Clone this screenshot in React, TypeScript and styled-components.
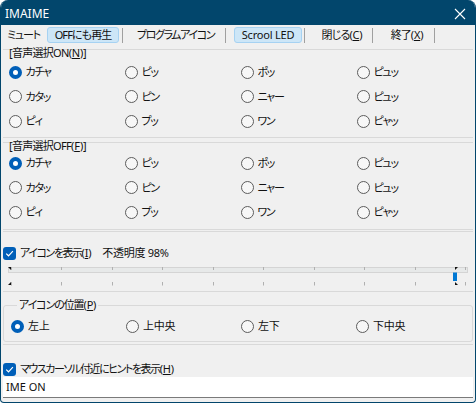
import React from 'react'
import styled, { createGlobalStyle } from 'styled-components'

const GlobalStyle = createGlobalStyle`
  html, body {
    margin: 0;
    padding: 0;
    background: #ffffff;
  }
  body {
    font-family: 'Noto Sans', 'Noto Sans CJK JP', sans-serif;
    font-size: 11px;
    font-weight: 400;
    letter-spacing: -0.9px;
    color: #1a1a1a;
  }
  * {
    box-sizing: border-box;
  }
`

const ACCENT = '#02466c'
const BLUE = '#005fb8'

const TOP_SOUNDS = [
  ['カチャ', 'ピッ', 'ポッ', 'ピュッ'],
  ['カタッ', 'ピン', 'ニャー', 'ピュッ'],
  ['ピィ', 'プッ', 'ワン', 'ピャッ'],
]

const POSITIONS = ['左上', '上中央', '左下', '下中央']

// アクセスキー表示 "(X)"
const Key = ({ k }: { k: string }) => (
  <KeyText>(<u>{k}</u>)</KeyText>
)

type ToolItem =
  | { kind: 'btn'; label: React.ReactNode; w: number; ml: number; on?: boolean; ls: number }
  | { kind: 'sep'; ml: number }

const TOOLS: ToolItem[] = [
  { kind: 'btn', label: 'ミュート', w: 41, ml: 0, ls: -1.2 },
  { kind: 'btn', label: 'OFFにも再生', w: 72, ml: 3, on: true, ls: -0.9 },
  { kind: 'sep', ml: 3 },
  { kind: 'btn', label: 'プログラムアイコン', w: 97, ml: 4, ls: -1.4 },
  { kind: 'sep', ml: 1 },
  { kind: 'btn', label: 'Scrool LED', w: 68, ml: 8, on: true, ls: -0.2 },
  { kind: 'sep', ml: 2 },
  { kind: 'btn', label: <>閉じる<Key k="C" /></>, w: 56, ml: 9, ls: -0.9 },
  { kind: 'sep', ml: 2 },
  { kind: 'btn', label: <>終了<Key k="X" /></>, w: 52, ml: 8, ls: -0.9 },
  { kind: 'sep', ml: 1 },
]

const Check = () => (
  <CheckBox>
    <svg width="9" height="9" viewBox="0 0 9 9">
      <path d="M1.2 4.6 L3.5 6.8 L7.9 2.2" stroke="#fff" strokeWidth="1.2" fill="none" />
    </svg>
  </CheckBox>
)

const SoundGroup = ({ title, gapTop, padTop, padBottom }: {
  title: React.ReactNode
  gapTop: number
  padTop: number
  padBottom: number
}) => (
  <SoundPanel $gapTop={gapTop} $padBottom={padBottom}>
    <PanelLabel>{title}</PanelLabel>
    <RadioGrid $padTop={padTop}>
      {TOP_SOUNDS.flat().map((s, i) => (
        <RadioItem key={i}>
          <RadioCircle $on={i === 0} />
          <RadioText $ls={-1.3}>{s}</RadioText>
        </RadioItem>
      ))}
    </RadioGrid>
  </SoundPanel>
)

export default function App() {
  return (
    <>
      <GlobalStyle />
      <Window>
        <TitleBar>
          <TitleText>IMAIME</TitleText>
          <CloseIcon width="12" height="12" viewBox="0 0 12 12">
            <path d="M1 1 L11 11 M11 1 L1 11" stroke="#ffffff" strokeWidth="1.1" fill="none" />
          </CloseIcon>
        </TitleBar>

        <Body>
          <Toolbar>
            {TOOLS.map((t, i) =>
              t.kind === 'sep' ? (
                <ToolSep key={i} $ml={t.ml} />
              ) : (
                <ToolButton key={i} $w={t.w} $ml={t.ml} $on={t.on} $ls={t.ls}>
                  {t.label}
                </ToolButton>
              )
            )}
          </Toolbar>

          <SoundGroup title={<>[音声選択ON<Key k="N" />]</>} gapTop={0} padTop={2} padBottom={3.5} />
          <SoundGroup title={<>[音声選択OFF<Key k="F" />]</>} gapTop={4} padTop={0} padBottom={4.5} />

          <SliderPanel>
            <CheckRow>
              <Check />
              <CheckText>アイコンを表示<Key k="I" /></CheckText>
              <OpacityText>不透明度 98%</OpacityText>
            </CheckRow>
            <Slider>
              <Track />
              <SliderMarks width="470" height="19" viewBox="0 0 470 19">
                {Array.from({ length: 10 }).map((_, k) => {
                  const x = Math.round(7.8 + 50.5 * k) + 0.5
                  return (
                    <g key={k} stroke="#b0b0b0" strokeWidth="1">
                      <line x1={x} y1={0} x2={x} y2={3} />
                      <line x1={x} y1={15} x2={x} y2={18.5} />
                    </g>
                  )
                })}
                <path d="M5 0 H8 V3 Z" fill="#111" />
                <path d="M5 18 H8 V15 Z" fill="#111" />
                <path d="M452 0 H455 L452 3 Z" fill="#111" />
                <path d="M452 18 H455 L452 15 Z" fill="#111" />
                <rect x="450" y="5.5" width="4" height="8.5" fill="#0078d4" />
              </SliderMarks>
            </Slider>
          </SliderPanel>

          <PositionGroup>
            <GroupLabel>アイコンの位置<Key k="P" /></GroupLabel>
            <PositionRow>
              {POSITIONS.map((p, i) => (
                <RadioItem key={p}>
                  <RadioCircle $on={i === 0} />
                  <RadioText $ls={-0.3}>{p}</RadioText>
                </RadioItem>
              ))}
            </PositionRow>
          </PositionGroup>

          <HintPanel>
            <CheckRow>
              <Check />
              <CheckText>マウスカーソル付近にヒントを表示<Key k="H" /></CheckText>
            </CheckRow>
            <EditBox>IME ON</EditBox>
          </HintPanel>
        </Body>
      </Window>
    </>
  )
}

const Window = styled.div`
  width: 476px;
  height: 403px;
  background: #f0f0f0;
  border: 1px solid ${ACCENT};
  border-top: none;
  border-radius: 8px 8px 4px 4px;
  overflow: hidden;
  display: flex;
  flex-direction: column;
  font-feature-settings: 'palt' 1;
`

const TitleBar = styled.div`
  height: 25px;
  flex: none;
  background: ${ACCENT};
  display: flex;
  align-items: center;
  justify-content: space-between;
  padding: 0 9px 0 4px;
`

const TitleText = styled.span`
  font-family: 'Noto Sans', sans-serif;
  font-size: 12px;
  letter-spacing: 0;
  color: #ffffff;
  line-height: 14px;
  margin-top: 2px;
`

const CloseIcon = styled.svg`
  display: block;
  margin-top: 2px;
`

const Body = styled.div`
  flex: 1;
  display: flex;
  flex-direction: column;
  padding: 0 2px;
`

const KeyText = styled.span`
  letter-spacing: -0.2px;

  u {
    text-underline-offset: 1px;
  }
`

const Toolbar = styled.div`
  height: 24px;
  flex: none;
  display: flex;
  align-items: flex-start;
  padding-top: 2px;
`

const ToolButton = styled.div<{ $w: number; $ml: number; $on?: boolean; $ls: number }>`
  width: ${p => p.$w}px;
  margin-left: ${p => p.$ml}px;
  height: 16px;
  flex: none;
  display: flex;
  align-items: center;
  justify-content: center;
  white-space: nowrap;
  line-height: 14px;
  color: #111;
  letter-spacing: ${p => p.$ls}px;
  border-radius: 3px;
  border: 1px solid ${p => (p.$on ? '#a6d2f2' : 'transparent')};
  background: ${p => (p.$on ? '#cde6f7' : 'transparent')};
`

const ToolSep = styled.div<{ $ml: number }>`
  width: 1px;
  height: 15px;
  margin-top: 1px;
  margin-left: ${p => p.$ml}px;
  background: #a0a0a0;
  flex: none;
`

const SoundPanel = styled.section<{ $gapTop: number; $padBottom: number }>`
  margin-top: ${p => p.$gapTop}px;
  border-top: 1px solid #d9d9d9;
  border-bottom: 1px solid #d9d9d9;
  padding-bottom: ${p => p.$padBottom}px;
`

const PanelLabel = styled.div`
  line-height: 10px;
  height: 10px;
  margin-top: -2px;
  padding-left: 6px;
  color: #111;
  letter-spacing: -0.7px;
  white-space: nowrap;
`

const RadioGrid = styled.div<{ $padTop: number }>`
  display: grid;
  grid-template-columns: repeat(4, 116px);
  grid-auto-rows: 24.5px;
  padding: ${p => p.$padTop}px 0 0 5.5px;
`

const RadioItem = styled.div`
  display: flex;
  align-items: center;
`

const RadioCircle = styled.span<{ $on?: boolean }>`
  width: 13px;
  height: 13px;
  flex: none;
  border-radius: 50%;
  border: 1px solid #5c5c5c;
  background: #f7f7f7;
  ${p => p.$on && `
    border: 4px solid ${BLUE};
    background: #ffffff;
  `}
`

const RadioText = styled.span<{ $ls: number }>`
  margin-left: 4px;
  line-height: 14px;
  letter-spacing: ${p => p.$ls}px;
  color: #111;
  white-space: nowrap;
`

const SliderPanel = styled.section`
  margin-top: 1px;
  height: 61px;
  flex: none;
  border-top: 1px solid #d9d9d9;
  border-bottom: 1px solid #d9d9d9;
  padding-top: 13px;
`

const CheckRow = styled.div`
  height: 16px;
  display: flex;
  align-items: center;
`

const CheckBox = styled.span`
  width: 13px;
  height: 13px;
  flex: none;
  border-radius: 3px;
  background: ${BLUE};
  display: flex;
  align-items: center;
  justify-content: center;
`

const CheckText = styled.span`
  margin-left: 4px;
  line-height: 14px;
  letter-spacing: -1.45px;
  color: #111;
  white-space: nowrap;
`

const OpacityText = styled.span`
  margin-left: 11px;
  line-height: 14px;
  letter-spacing: -0.3px;
  color: #111;
`

const Slider = styled.div`
  position: relative;
  height: 19px;
  margin-top: 4px;
`

const Track = styled.div`
  margin: 6px 0 0 5px;
  width: 460px;
  height: 6px;
  background: #e7e9e9;
  border: 1px solid #d4d4d4;
`

const SliderMarks = styled.svg`
  position: absolute;
  left: 0;
  top: 0;
  display: block;
`

const PositionGroup = styled.div`
  margin-top: 13px;
  height: 37px;
  flex: none;
  border: 1px solid #d9d9d9;
  border-radius: 3px;
  padding-left: 7px;
`

const GroupLabel = styled.div`
  display: table;
  margin: -8px 0 0 6px;
  padding: 0 2px;
  height: 14px;
  line-height: 14px;
  background: #f0f0f0;
  letter-spacing: -1.1px;
  color: #111;
  white-space: nowrap;
`

const PositionRow = styled.div`
  display: grid;
  grid-template-columns: repeat(4, 115px);
  height: 20px;
  margin-top: 4px;
  align-items: center;
`

const HintPanel = styled.section`
  margin-top: 2px;
  border-top: 1px solid #d9d9d9;
  padding-top: 16px;
`

const EditBox = styled.div`
  height: 21px;
  background: #ffffff;
  border-bottom: 1px solid #7a7a7a;
  padding-left: 3px;
  line-height: 20px;
  letter-spacing: 0;
  color: #111;
`
